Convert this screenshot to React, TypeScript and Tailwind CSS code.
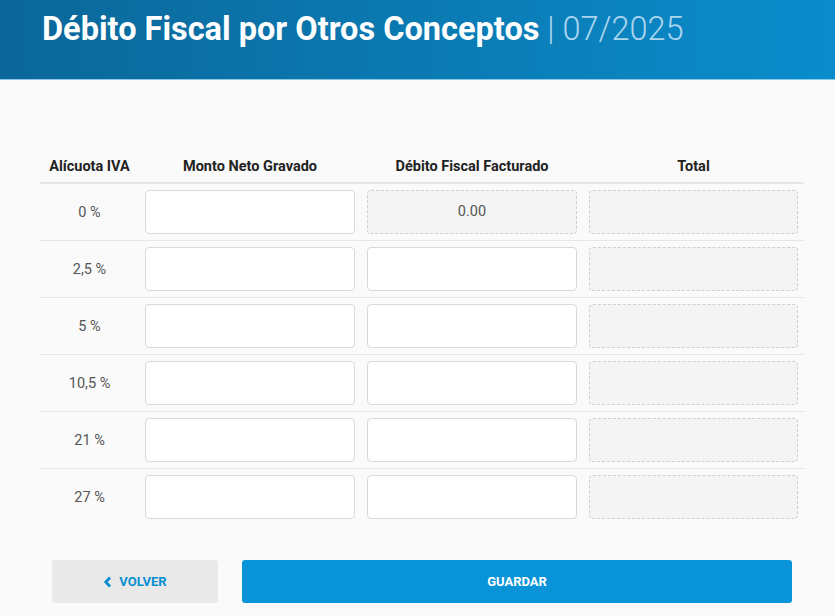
import React from "react";

const rates = ["0 %", "2,5 %", "5 %", "10,5 %", "21 %", "27 %"];

function Field({ disabled, value }: { disabled?: boolean; value?: string }) {
    if (disabled) {
        return (
            <div className="flex h-[44px] w-full items-center justify-center rounded-[4px] border border-dashed border-[#d0d0d0] bg-[#f4f4f4] text-[14.5px] text-[#555]">
                {value}
            </div>
        );
    }
    return <input type="text" className="block h-[44px] w-full rounded-[4px] border border-[#d9d9d9] bg-white outline-none" />;
}

export default function App() {
    return (
        <div className="min-h-[616px] w-full bg-[#fafafa] font-['Roboto',sans-serif]">
            <div className="h-[80px] border-b-[1.5px] border-[#8cc7e6] bg-gradient-to-r from-[#0b6799] to-[#0a8dcc] pl-[42px] pt-[10px]">
                <h1 className="text-[32.5px] font-bold leading-[38px] text-white">
                    Débito Fiscal por Otros Conceptos
                    <span className="font-light text-[#acd6ee]"> | 07/2025</span>
                </h1>
            </div>

            <div className="px-[40px] pt-[73px]">
                <table className="w-[764px] table-fixed border-collapse">
                    <colgroup>
                        <col className="w-[99px]" />
                        <col className="w-[222px]" />
                        <col className="w-[222px]" />
                        <col className="w-[221px]" />
                    </colgroup>
                    <thead>
                        <tr className="border-b-2 border-[#e6e6e6]">
                            {["Alícuota IVA", "Monto Neto Gravado", "Débito Fiscal Facturado", "Total"].map((h) => (
                                <th key={h} className="h-[30px] pb-[4px] text-center align-bottom text-[14.5px] font-bold text-[#222]">
                                    {h}
                                </th>
                            ))}
                        </tr>
                    </thead>
                    <tbody>
                        {rates.map((r, i) => (
                            <tr key={r} className={i < rates.length - 1 ? "border-b border-[#e6e6e6]" : ""}>
                                <td className="h-[57px] pt-[2px] text-center text-[14.5px] text-[#555]">{r}</td>
                                <td className="px-[6px] pt-[1px]">
                                    <Field />
                                </td>
                                <td className="px-[6px] pt-[1px]">
                                    {i === 0 ? <Field disabled value="0.00" /> : <Field />}
                                </td>
                                <td className="px-[6px] pt-[1px]">
                                    <Field disabled />
                                </td>
                            </tr>
                        ))}
                    </tbody>
                </table>

                <div className="mt-[35px] flex gap-[24px] pl-[12px]">
                    <button className="flex h-[43px] w-[166px] items-center justify-center gap-[7px] rounded-[3px] bg-[#e9e9e9] text-[13px] font-bold text-[#0a8fd1]">
                        <svg width="9" height="12" viewBox="0 0 9 12">
                            <path d="M7 1.5 L2.8 6 L7 10.5" fill="none" stroke="#0a8fd1" strokeWidth="2.8" />
                        </svg>
                        VOLVER
                    </button>
                    <button className="flex h-[43px] w-[550px] items-center justify-center rounded-[3px] bg-[#0894d6] text-[13px] font-bold text-white">
                        GUARDAR
                    </button>
                </div>
            </div>
        </div>
    );
}
